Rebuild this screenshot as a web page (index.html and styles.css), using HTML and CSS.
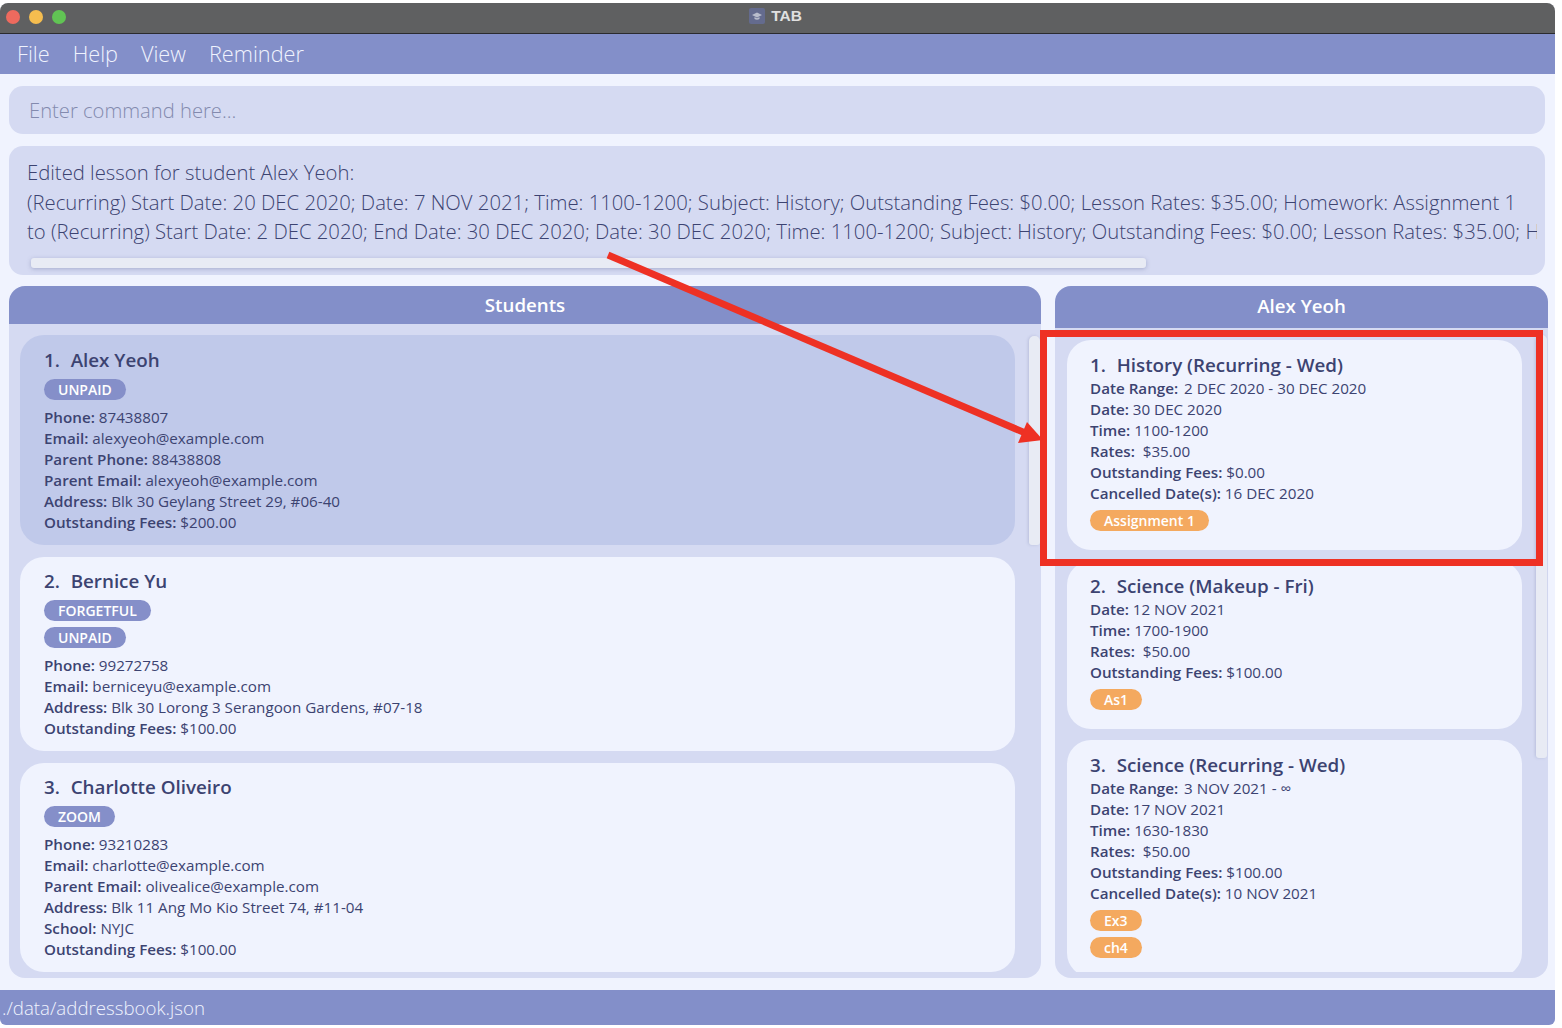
FILE: index.html
```html
<!DOCTYPE html>
<html>
  <head>
    <title>TAB</title>
    <link rel="stylesheet" href="styles.css">
  </head>
  <body>
    <div class="window">
      <div class="titlebar">
        <div class="lights">
          <span class="light red"></span>
          <span class="light yellow"></span>
          <span class="light green"></span>
        </div>
        <div class="app-name">
          <svg class="app-icon" width="16" height="16" viewBox="0 0 16 16">
            <rect width="16" height="16" rx="2" fill="#646b8e"/>
            <path d="M8 4.5 L13 7 L8 9.5 L3 7 Z M5.5 9 V11 Q8 12.5 10.5 11 V9 L8 10.2 Z" fill="#b9bdcc"/>
          </svg>
          <span>TAB</span>
        </div>
      </div>

      <div class="menubar">
        <span>File</span>
        <span>Help</span>
        <span>View</span>
        <span>Reminder</span>
      </div>

      <div class="content">
        <div class="command-box">Enter command here...</div>

        <div class="result-box">
          <div class="result-line">Edited lesson for student Alex Yeoh:</div>
          <div class="result-line">(Recurring) Start Date: 20 DEC 2020; Date: 7 NOV 2021; Time: 1100-1200; Subject: History; Outstanding Fees: $0.00; Lesson Rates: $35.00; Homework: Assignment 1</div>
          <div class="result-line">to (Recurring) Start Date: 2 DEC 2020; End Date: 30 DEC 2020; Date: 30 DEC 2020; Time: 1100-1200; Subject: History; Outstanding Fees: $0.00; Lesson Rates: $35.00; Homework: Assignment 1</div>
          <div class="h-scroll"></div>
        </div>

        <div class="panels">
          <div class="panel">
            <div class="panel-head">Students</div>
            <div class="panel-body">
              <div class="list">
                <div class="card selected">
                  <div class="card-title"><span class="num">1.</span>  Alex Yeoh</div>
                  <div class="tags"><span class="tag">UNPAID</span></div>
                  <div class="row"><b>Phone:</b> 87438807</div>
                  <div class="row"><b>Email:</b> alexyeoh@example.com</div>
                  <div class="row"><b>Parent Phone:</b> 88438808</div>
                  <div class="row"><b>Parent Email:</b> alexyeoh@example.com</div>
                  <div class="row"><b>Address:</b> Blk 30 Geylang Street 29, #06-40</div>
                  <div class="row"><b>Outstanding Fees:</b> $200.00</div>
                </div>
                <div class="card">
                  <div class="card-title"><span class="num">2.</span>  Bernice Yu</div>
                  <div class="tags">
                    <span class="tag">FORGETFUL</span>
                    <span class="tag">UNPAID</span>
                  </div>
                  <div class="row"><b>Phone:</b> 99272758</div>
                  <div class="row"><b>Email:</b> berniceyu@example.com</div>
                  <div class="row"><b>Address:</b> Blk 30 Lorong 3 Serangoon Gardens, #07-18</div>
                  <div class="row"><b>Outstanding Fees:</b> $100.00</div>
                </div>
                <div class="card">
                  <div class="card-title"><span class="num">3.</span>  Charlotte Oliveiro</div>
                  <div class="tags"><span class="tag">ZOOM</span></div>
                  <div class="row"><b>Phone:</b> 93210283</div>
                  <div class="row"><b>Email:</b> charlotte@example.com</div>
                  <div class="row"><b>Parent Email:</b> olivealice@example.com</div>
                  <div class="row"><b>Address:</b> Blk 11 Ang Mo Kio Street 74, #11-04</div>
                  <div class="row"><b>School:</b> NYJC</div>
                  <div class="row"><b>Outstanding Fees:</b> $100.00</div>
                </div>
              </div>
              <div class="v-scroll students-scroll"></div>
            </div>
          </div>

          <div class="panel">
            <div class="panel-head lessons-head">Alex Yeoh</div>
            <div class="panel-body">
              <div class="list lessons">
                <div class="card lesson">
                  <div class="card-title"><span class="num">1.</span>  History (Recurring - Wed)</div>
                  <div class="row range"><b>Date Range:</b> 2 DEC 2020 - 30 DEC 2020</div>
                  <div class="row"><b>Date:</b> 30 DEC 2020</div>
                  <div class="row"><b>Time:</b> 1100-1200</div>
                  <div class="row"><b>Rates:</b>  $35.00</div>
                  <div class="row"><b>Outstanding Fees:</b> $0.00</div>
                  <div class="row"><b>Cancelled Date(s):</b> 16 DEC 2020</div>
                  <div class="tags"><span class="tag orange">Assignment 1</span></div>
                </div>
                <div class="card lesson">
                  <div class="card-title"><span class="num">2.</span>  Science (Makeup - Fri)</div>
                  <div class="row"><b>Date:</b> 12 NOV 2021</div>
                  <div class="row"><b>Time:</b> 1700-1900</div>
                  <div class="row"><b>Rates:</b>  $50.00</div>
                  <div class="row"><b>Outstanding Fees:</b> $100.00</div>
                  <div class="tags"><span class="tag orange">As1</span></div>
                </div>
                <div class="card lesson">
                  <div class="card-title"><span class="num">3.</span>  Science (Recurring - Wed)</div>
                  <div class="row range"><b>Date Range:</b> 3 NOV 2021 - ∞</div>
                  <div class="row"><b>Date:</b> 17 NOV 2021</div>
                  <div class="row"><b>Time:</b> 1630-1830</div>
                  <div class="row"><b>Rates:</b>  $50.00</div>
                  <div class="row"><b>Outstanding Fees:</b> $100.00</div>
                  <div class="row"><b>Cancelled Date(s):</b> 10 NOV 2021</div>
                  <div class="tags">
                    <span class="tag orange">Ex3</span>
                    <span class="tag orange">ch4</span>
                  </div>
                </div>
              </div>
              <div class="v-scroll lessons-scroll"></div>
            </div>
          </div>
        </div>
      </div>

      <div class="statusbar">./data/addressbook.json</div>

      <!-- Annotation drawn over the screenshot -->
      <div class="red-box"></div>
      <svg class="red-arrow" width="450" height="200" viewBox="0 0 450 200">
        <line x1="8" y1="5" x2="430" y2="185" stroke="#ee3124" stroke-width="7"/>
        <polygon points="443,190 427,172 418,193" fill="#ee3124"/>
      </svg>
    </div>
  </body>
</html>
```

FILE: styles.css
```css
html, body {
  margin: 0;
  background: #ffffff;
}
body {
  height: 1028px;
  overflow: hidden;
  font-family: "Open Sans", "Noto Sans", sans-serif;
  color: #3c4371;
}

.window {
  position: relative;
  width: 1555px;
  height: 1022px;
  margin-top: 3px;
  display: flex;
  flex-direction: column;
  background: #f0f3fe;
  border-radius: 8px 8px 6px 6px;
  overflow: hidden;
}

/* Title bar */
.titlebar {
  flex: none;
  height: 30px;
  display: flex;
  align-items: center;
  justify-content: center;
  position: relative;
  background: #5f6061;
  border-bottom: 1px solid #2b2b2e;
}
.lights {
  position: absolute;
  left: 6px;
  top: 7px;
  display: flex;
  gap: 9px;
}
.light {
  width: 14px;
  height: 14px;
  border-radius: 50%;
}
.red { background: #ee6a5e; }
.yellow { background: #f5bd4f; }
.green { background: #61c454; }
.app-name {
  display: flex;
  align-items: center;
  gap: 6px;
  margin: 0 4px 4px 0;
  font-family: "Liberation Sans", Arial, sans-serif;
  font-size: 15.5px;
  font-weight: bold;
  color: #e0e0e0;
}

/* Menu */
.menubar {
  flex: none;
  height: 38px;
  padding-bottom: 2px;
  display: flex;
  align-items: center;
  gap: 23px;
  padding-left: 17px;
  background: #838fc9;
  color: #f0f3fe;
  font-size: 21.7px;
  font-weight: 300;
}

.content {
  flex: 1;
  min-height: 0;
  display: flex;
  flex-direction: column;
  padding: 12px 7px 12px 9px;
}

/* Command box */
.command-box {
  flex: none;
  height: 48px;
  margin-right: 3px;
  padding-left: 20px;
  display: flex;
  align-items: center;
  background: #d5daf2;
  border-radius: 14px;
  color: #838aae;
  font-size: 20.2px;
  font-weight: 300;
}

/* Result box */
.result-box {
  flex: none;
  position: relative;
  height: 129px;
  margin-top: 12px;
  margin-right: 3px;
  padding: 12px 8px 0 18px;
  box-sizing: border-box;
  background: #d5daf2;
  border-radius: 14px;
  font-size: 20.3px;
  font-weight: 300;
  color: #3c4371;
}
.result-line {
  height: 29.5px;
  line-height: 29.5px;
  white-space: nowrap;
  overflow: hidden;
}
.h-scroll {
  position: absolute;
  left: 22px;
  top: 112px;
  width: 1115px;
  height: 10px;
  background: #e8ebf4;
  border-radius: 3px;
  box-shadow: 0 1px 4px rgba(80, 90, 140, 0.35);
}

/* Panels */
.panels {
  flex: 1;
  min-height: 0;
  margin-top: 11px;
  display: flex;
  gap: 14px;
}
.panel {
  flex: none;
  width: 1032px;
  display: flex;
  flex-direction: column;
}
.panel + .panel {
  width: 493px;
}
.panel-head {
  flex: none;
  height: 38px;
  line-height: 38px;
  text-align: center;
  background: #838fc9;
  border-radius: 16px 16px 0 0;
  color: #ffffff;
  font-size: 18.7px;
  font-weight: 600;
}
.lessons-head {
  height: 42px;
  line-height: 40px;
}
.panel-body {
  flex: 1;
  min-height: 0;
  display: flex;
  background: #d5daf2;
  border-radius: 0 0 16px 16px;
}
.list {
  flex: 1;
  min-width: 0;
  margin-bottom: 6px;
  padding: 11px 14px 0 11px;
  display: flex;
  flex-direction: column;
  gap: 12px;
  overflow: hidden;
}
.lessons {
  padding: 12px 14px 0 12px;
  gap: 11px;
}
.v-scroll {
  flex: none;
  width: 11px;
  margin-right: 1px;
  background: #e8ebf4;
  border-radius: 5px 5px 3px 3px;
  box-shadow: -1px 0 3px rgba(80, 90, 140, 0.2);
}
.students-scroll {
  height: 209px;
  margin-top: 12px;
}
.lessons-scroll {
  height: 423px;
  margin-top: 7px;
}

/* Cards */
.card {
  flex: none;
  padding: 12px 24px 12px;
  background: #f0f3fe;
  border-radius: 24px;
}
.card.selected {
  padding-top: 13px;
  background: #c0c9ea;
}
.card.lesson {
  padding: 13px 23px 19px;
}
.card-title {
  height: 25px;
  line-height: 25px;
  font-size: 18.8px;
  font-weight: 600;
  white-space: pre;
}
.num {
  margin-right: 1px;
}
.row {
  height: 21px;
  line-height: 21px;
  font-size: 15.2px;
  white-space: pre;
}
.row b {
  font-weight: 600;
}
.range b {
  margin-right: 2px;
}
.tags {
  display: flex;
  flex-direction: column;
  align-items: flex-start;
  gap: 6px;
  margin: 6px 0 7px;
}
.lesson .tags {
  margin: 6px 0 0;
}
.tag {
  height: 21px;
  line-height: 21px;
  padding: 0 14px;
  background: #858fc9;
  border-radius: 11px;
  color: #ffffff;
  font-size: 14px;
  font-weight: 600;
}
.tag.orange {
  background: #f4a95f;
}

/* Status bar */
.statusbar {
  flex: none;
  height: 35px;
  line-height: 35px;
  padding-left: 2px;
  background: #838fc9;
  color: #f0f3fe;
  font-size: 18.7px;
  font-weight: 300;
}

/* Annotation */
.red-box {
  position: absolute;
  left: 1040px;
  top: 327px;
  width: 503px;
  height: 236px;
  box-sizing: border-box;
  border: 7px solid #ee3124;
}
.red-arrow {
  position: absolute;
  left: 600px;
  top: 247px;
}
```
